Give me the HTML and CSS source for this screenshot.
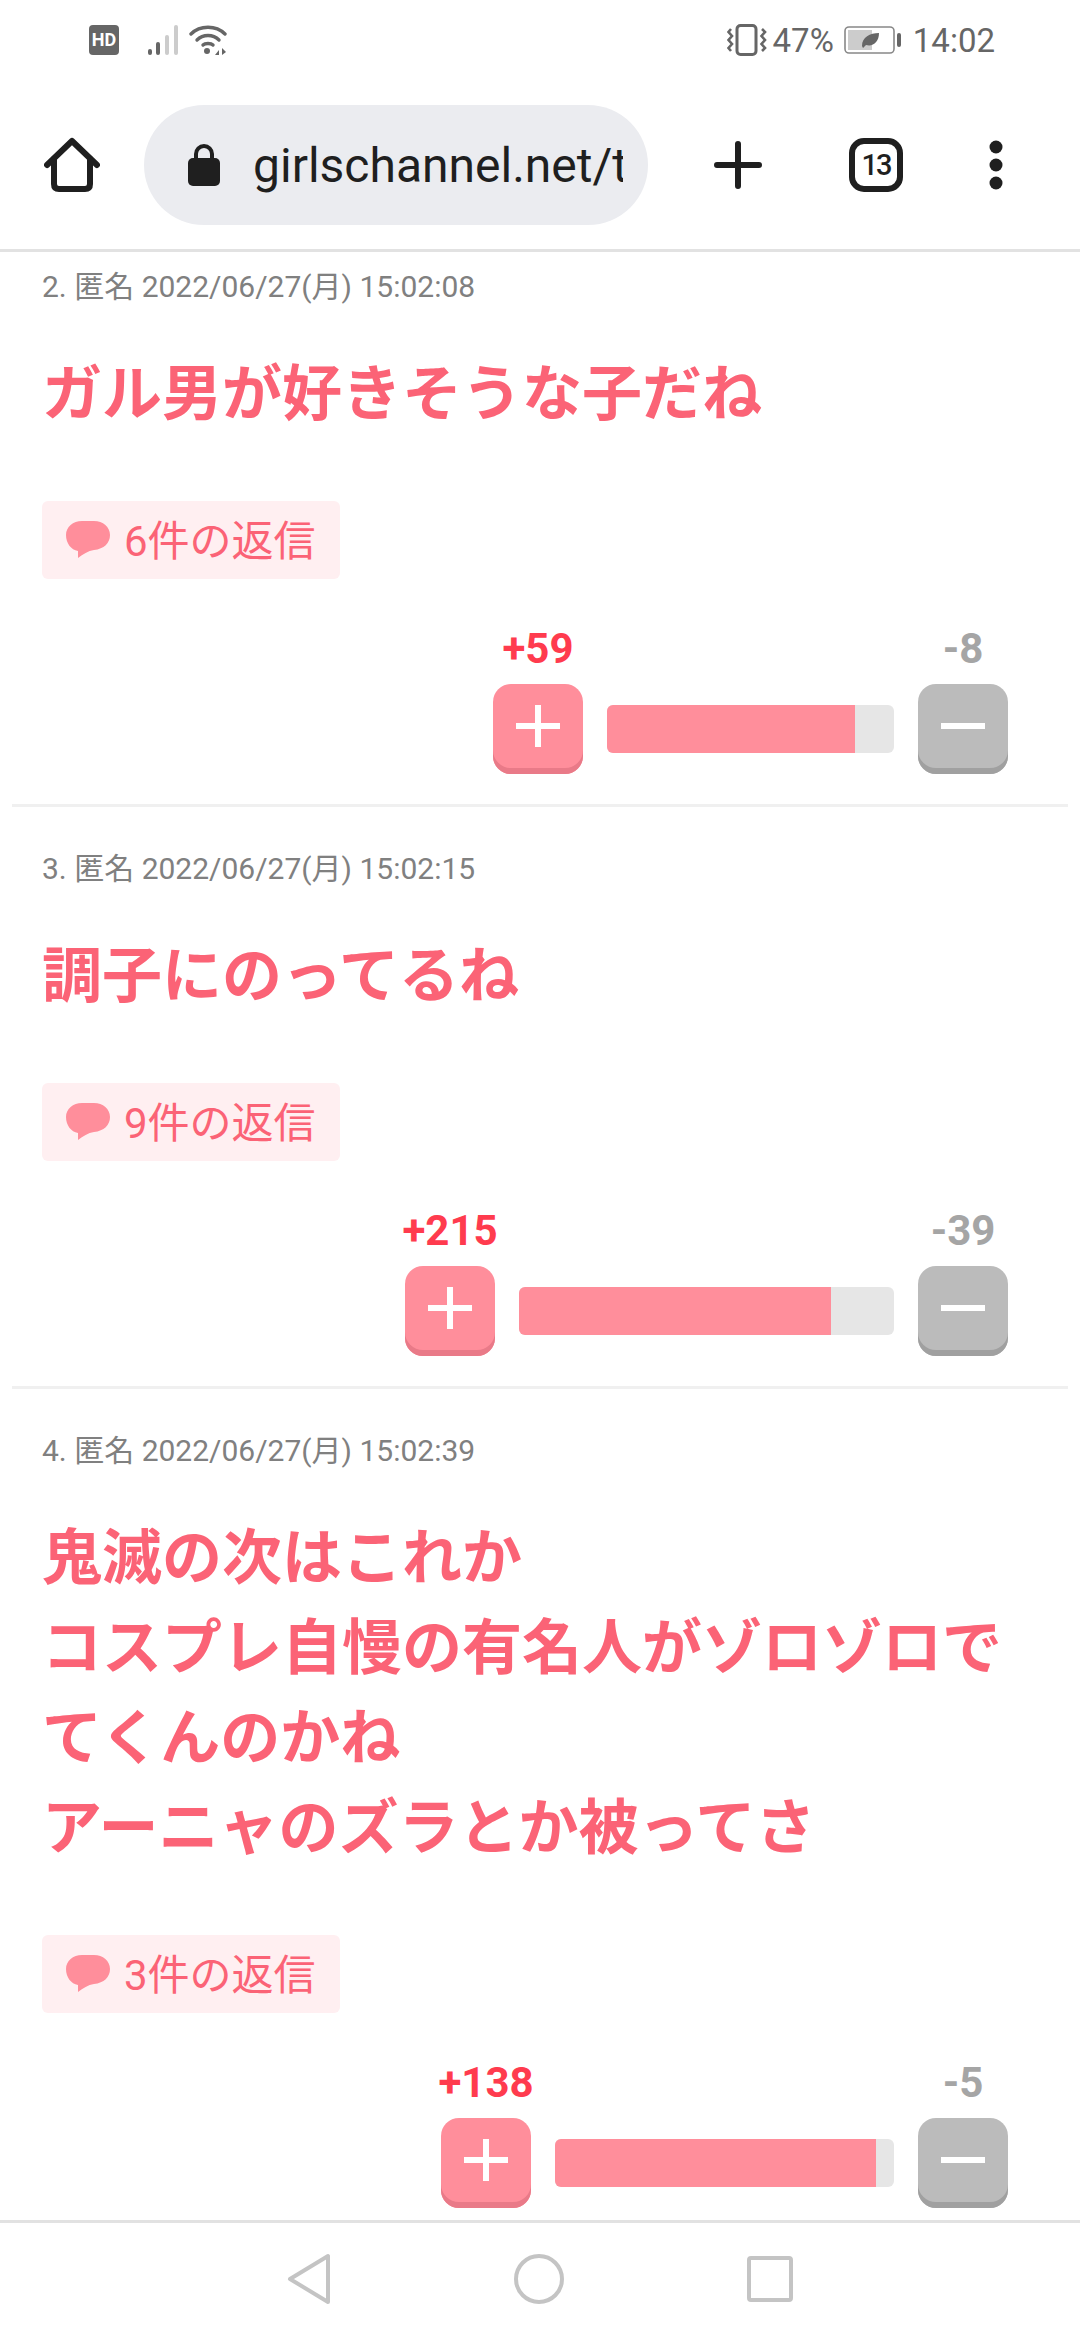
FILE: index.html
```html
<!DOCTYPE html>
<html lang="ja">
<head>
    <meta charset="UTF-8">
    <meta name="viewport" content="width=device-width, initial-scale=1.0">
    <title>girlschannel</title>
    <link rel="stylesheet" href="styles.css">
</head>
<body>
    <div class="status-bar">
        <svg class="st-hd" width="30" height="30" viewBox="0 0 30 30"><rect width="30" height="30" rx="4" fill="#666"/><text x="15" y="21" text-anchor="middle" class="hd-text">HD</text></svg>
        <svg class="st-signal" width="32" height="30" viewBox="0 0 32 30">
            <rect x="1" y="24" width="4" height="6" rx="2" fill="#666"/>
            <rect x="9" y="17" width="4" height="13" rx="2" fill="#666"/>
            <rect x="18" y="10" width="4" height="20" rx="2" fill="#ccc"/>
            <rect x="27" y="0" width="4" height="30" rx="2" fill="#ccc"/>
        </svg>
        <svg class="st-wifi" width="38" height="30" viewBox="0 0 38 30" fill="none" stroke="#666" stroke-width="3.4" stroke-linecap="round">
            <path d="M2 9 C11 0 27 0 36 9"/>
            <path d="M8 15 C14 9 24 9 30 15"/>
            <path d="M14 20 C16 18 22 18 24 20"/>
            <circle cx="18" cy="26" r="3" fill="#666" stroke="none"/>
            <path d="M26 30 L30 25 V30 Z M33 23 V30 L37 27 Z" fill="#666" stroke="none"/>
        </svg>
        <div class="status-right">
            <svg width="40" height="32" viewBox="0 0 40 32" fill="none" stroke="#666">
                <rect x="10" y="1.5" width="19" height="29" rx="3.5" stroke-width="3"/>
                <path d="M4 5 L1.500 8 L5 12 L1.500 16 L5 20 L1.500 24 L4 27" stroke-width="2.600"/>
                <path d="M35 5 L38 8 L34.500 12 L38 16 L34.500 20 L38 24 L35 27" stroke-width="2.600"/>
            </svg>
            <span class="st-pct">47%</span>
            <svg width="58" height="28" viewBox="0 0 58 28">
                <rect x="1" y="1" width="49" height="26" rx="4" fill="#fff" stroke="#888" stroke-width="1.600"/>
                <rect x="4" y="4" width="24" height="20" fill="#ccc"/>
                <path d="M18 20 C18 11 26 7 35 7 C35 16 29 21 22 19 L19 22 Z" fill="#666"/>
                <rect x="53" y="7" width="4" height="14" rx="2" fill="#666"/>
            </svg>
            <span class="st-time">14:02</span>
        </div>
    </div>

    <div class="toolbar">
        <svg class="tb-home" width="56" height="56" viewBox="0 0 56 56" fill="none" stroke="#1f1f1f" stroke-width="6" stroke-linecap="round" stroke-linejoin="round">
            <path d="M3 28 L28 4 L53 28"/>
            <path d="M10 22 V47 Q10 52 15 52 H41 Q46 52 46 47 V22"/>
        </svg>
        <div class="url-pill">
            <svg width="32" height="42" viewBox="0 0 32 42">
                <path d="M8 16 V10 A8 8 0 0 1 24 10 V16" fill="none" stroke="#1f1f1f" stroke-width="4"/>
                <rect y="14" width="32" height="28" rx="5" fill="#1f1f1f"/>
            </svg>
            <div class="url-text">girlschannel.net/t</div>
        </div>
        <svg class="tb-plus" width="48" height="48" viewBox="0 0 48 48" stroke="#1f1f1f" stroke-width="6" stroke-linecap="round">
            <path d="M24 3 V45 M3 24 H45"/>
        </svg>
        <div class="tab-count">13</div>
        <svg class="tb-dots" width="14" height="50" viewBox="0 0 14 50" fill="#1f1f1f">
            <circle cx="7" cy="7" r="6.500"/><circle cx="7" cy="25" r="6.500"/><circle cx="7" cy="43" r="6.500"/>
        </svg>
    </div>

    <main class="thread">
        <article class="comment">
            <div class="comment-meta">2. 匿名 2022/06/27(月) 15:02:08</div>
            <div class="comment-body">ガル男が好きそうな子だね</div>
            <a class="reply-badge">
                <svg width="44" height="38" viewBox="0 0 44 38"><path d="M16 0 H28 C37 0 44 6 44 14 C44 22 38 28 28 29 C22 30 17 33 12 37 L12 30 C5 29 0 22 0 14 C0 6 7 0 16 0 Z" fill="#ff8e9b"/></svg>
                <span class="reply-text">6件の返信</span>
            </a>
            <div class="vote-row">
                <div class="vote plus"><span class="vote-num">+59</span><div class="vote-btn"></div></div>
                <div class="vote-bar" style="width: 287px"><div class="vote-fill" style="width: 86.500%"></div></div>
                <div class="vote minus"><span class="vote-num">-8</span><div class="vote-btn"></div></div>
            </div>
        </article>
        <article class="comment">
            <div class="comment-meta">3. 匿名 2022/06/27(月) 15:02:15</div>
            <div class="comment-body">調子にのってるね</div>
            <a class="reply-badge">
                <svg width="44" height="38" viewBox="0 0 44 38"><path d="M16 0 H28 C37 0 44 6 44 14 C44 22 38 28 28 29 C22 30 17 33 12 37 L12 30 C5 29 0 22 0 14 C0 6 7 0 16 0 Z" fill="#ff8e9b"/></svg>
                <span class="reply-text">9件の返信</span>
            </a>
            <div class="vote-row">
                <div class="vote plus"><span class="vote-num">+215</span><div class="vote-btn"></div></div>
                <div class="vote-bar" style="width: 375px"><div class="vote-fill" style="width: 83.300%"></div></div>
                <div class="vote minus"><span class="vote-num">-39</span><div class="vote-btn"></div></div>
            </div>
        </article>
        <article class="comment">
            <div class="comment-meta">4. 匿名 2022/06/27(月) 15:02:39</div>
            <div class="comment-body">鬼滅の次はこれか<br>コスプレ自慢の有名人がゾロゾロで<br>てくんのかね<br>アーニャのズラとか被ってさ</div>
            <a class="reply-badge">
                <svg width="44" height="38" viewBox="0 0 44 38"><path d="M16 0 H28 C37 0 44 6 44 14 C44 22 38 28 28 29 C22 30 17 33 12 37 L12 30 C5 29 0 22 0 14 C0 6 7 0 16 0 Z" fill="#ff8e9b"/></svg>
                <span class="reply-text">3件の返信</span>
            </a>
            <div class="vote-row">
                <div class="vote plus"><span class="vote-num">+138</span><div class="vote-btn"></div></div>
                <div class="vote-bar" style="width: 339px"><div class="vote-fill" style="width: 94.700%"></div></div>
                <div class="vote minus"><span class="vote-num">-5</span><div class="vote-btn"></div></div>
            </div>
        </article>
    </main>

    <nav class="nav-bar">
        <svg width="44" height="52" viewBox="0 0 44 52" fill="none" stroke="#c4c4c4" stroke-width="4" stroke-linejoin="round">
            <path d="M41 3 V49 L3 26 Z"/>
        </svg>
        <svg width="50" height="50" viewBox="0 0 50 50" fill="none" stroke="#c4c4c4" stroke-width="4">
            <circle cx="25" cy="25" r="23"/>
        </svg>
        <svg width="46" height="46" viewBox="0 0 46 46" fill="none" stroke="#c4c4c4" stroke-width="4">
            <rect x="2" y="2" width="42" height="42" rx="2"/>
        </svg>
    </nav>
</body>
</html>
```

FILE: styles.css
```css
* {
    box-sizing: border-box;
}

html, body {
    margin: 0;
    height: 2340px;
    overflow: hidden;
}

body {
    display: flex;
    flex-direction: column;
    background-color: #fff;
    font-family: Roboto, "Noto Sans CJK JP", sans-serif;
}

/* status bar */
.status-bar {
    height: 62px;
    flex: none;
    display: flex;
    align-items: flex-start;
    padding: 25px 85px 0 89px;
    color: #666;
}

.hd-text {
    font-family: Roboto, sans-serif;
    font-size: 18px;
    font-weight: 700;
    fill: #fff;
}

.st-signal {
    margin-left: 28px;
}

.st-wifi {
    margin-left: 10px;
}

.status-right {
    margin-left: auto;
    display: flex;
    align-items: center;
    height: 30px;
    font-size: 33px;
}

.st-pct {
    margin-left: 6px;
}

.status-right svg + .st-pct + svg {
    margin-left: 10px;
}

.st-time {
    margin-left: 11px;
}

/* browser toolbar */
.toolbar {
    height: 190px;
    flex: none;
    display: flex;
    align-items: center;
    padding: 19px 0 0 44px;
    border-bottom: 3px solid #e2e2e2;
}

.tb-home {
    flex: none;
}

.url-pill {
    width: 504px;
    height: 120px;
    margin-left: 44px;
    padding: 0 25px 0 44px;
    display: flex;
    align-items: center;
    gap: 33px;
    background-color: #ebecf0;
    border-radius: 60px;
}

.url-pill svg {
    flex: none;
}

.url-text {
    overflow: hidden;
    white-space: nowrap;
    font-size: 48px;
    color: #1f1f1f;
}

.tb-plus {
    margin-left: 66px;
    flex: none;
}

.tab-count {
    width: 54px;
    height: 54px;
    margin-left: 87px;
    flex: none;
    border: 6px solid #1f1f1f;
    border-radius: 15px;
    display: flex;
    align-items: center;
    justify-content: center;
    font-size: 29px;
    font-weight: 500;
    letter-spacing: -2px;
    color: #1f1f1f;
}

.tb-dots {
    margin-left: 86px;
    flex: none;
}

/* comments */
.thread {
    flex: 1;
    min-height: 0;
    overflow: hidden;
    padding: 0 12px;
}

.comment {
    padding: 12px 30px 30px;
    border-bottom: 3px solid #f0f0f0;
}

.comment + .comment {
    padding-top: 39px;
}

.comment-meta {
    font-size: 30px;
    line-height: 45px;
    color: #808080;
}

.comment-body {
    margin-top: 41px;
    font-size: 60px;
    line-height: 90px;
    font-weight: 700;
    color: #fb6376;
}

.reply-badge {
    display: inline-flex;
    align-items: center;
    gap: 14px;
    height: 78px;
    margin-top: 61px;
    padding: 0 24px;
    width: 298px;
    background-color: #ffeff1;
    border-radius: 6px;
    font-size: 42px;
    color: #fb6376;
}

.reply-text {
    margin-bottom: 5px;
}

.vote-row {
    display: flex;
    justify-content: flex-end;
    align-items: flex-end;
    gap: 24px;
    margin-top: 47px;
    padding-right: 30px;
}

.vote {
    width: 90px;
    display: flex;
    flex-direction: column;
    align-items: center;
    flex: none;
}

.vote-num {
    font-size: 42px;
    line-height: 46px;
    margin-bottom: 12px;
    font-weight: 700;
    white-space: nowrap;
}

.vote-btn {
    position: relative;
    width: 90px;
    height: 90px;
    border-radius: 18px;
}

/* plus and minus marks on the buttons */
.vote-btn::before,
.vote-btn::after {
    content: "";
    position: absolute;
    background-color: #fff;
}

.vote-btn::before {
    left: 23px;
    top: 39px;
    width: 44px;
    height: 6px;
}

.plus .vote-btn::after {
    left: 42px;
    top: 21px;
    width: 6px;
    height: 42px;
}

.plus .vote-num {
    color: #ff3b4e;
}

.plus .vote-btn {
    background-color: #ff8e9b;
    box-shadow: inset 0 -6px 0 #e97a88;
}

.minus .vote-num {
    color: #a5a5a5;
}

.minus .vote-btn {
    background-color: #bbb;
    box-shadow: inset 0 -6px 0 #a0a0a0;
}

.vote-bar {
    flex: none;
    height: 48px;
    margin-bottom: 21px;
    background-color: #e6e6e6;
    border-radius: 6px;
    overflow: hidden;
}

.vote-fill {
    height: 100%;
    background-color: #ff8e9b;
}

/* android nav bar */
.nav-bar {
    height: 120px;
    flex: none;
    position: relative;
    background-color: #fff;
    border-top: 3px solid #e2e2e2;
    display: grid;
    grid-template-columns: 44px 50px 46px;
    column-gap: 183px;
    justify-content: center;
    align-items: center;
    padding: 0 0 6px 0;
}
```
